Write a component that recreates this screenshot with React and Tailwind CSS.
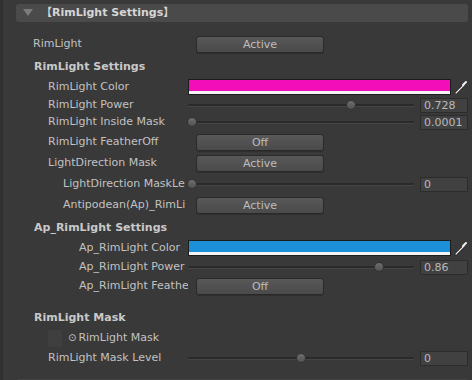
import React from 'react';

// Unity inspector style panel: RimLight settings
const LABEL_W = 185; // controls start at x=188 (container has a 3px left border)

function Label({ text, indent, bold }) {
  return (
    <div
      className={
        'shrink-0 overflow-hidden whitespace-nowrap leading-[16px] ' +
        (bold ? 'font-bold text-[#c9c9c9]' : 'text-[#c2c2c2]')
      }
      style={{ width: LABEL_W, paddingLeft: indent }}
    >
      {text}
    </div>
  );
}

function Button({ text }) {
  return (
    <div className="ml-[8px] w-[128px] h-[17px] rounded-[3px] border border-[#2a2a2a] bg-gradient-to-b from-[#585858] to-[#4a4a4a] shadow-[0_1px_0_#2e2e2e] flex items-center justify-center text-[#bdbdbd] leading-[15px]">
      {text}
    </div>
  );
}

function ValueBox({ value }) {
  return (
    <div className="ml-[6px] w-[48px] h-[15px] border border-[#2c2c2c] bg-[#414141] flex items-center pl-[3px] text-[#b9b9b9] leading-[13px]">
      {value}
    </div>
  );
}

function Slider({ frac, value }) {
  return (
    <div className="flex items-center">
      <div className="relative w-[226px] h-[16px]">
        <div className="absolute left-0 right-0 top-[7px] h-[2px] bg-[#2a2a2a] rounded-full" />
        <div className="absolute left-0 right-0 top-[9px] h-[1px] bg-[#454545]" />
        <div
          className="absolute top-[3px] w-[10px] h-[10px] rounded-full bg-gradient-to-b from-[#6e6e6e] to-[#525252] border border-[#333]"
          style={{ left: 4 + frac * 218 - 5 }}
        />
      </div>
      <ValueBox value={value} />
    </div>
  );
}

function Eyedropper() {
  return (
    <svg width="14" height="14" viewBox="0 0 14 14" className="ml-[3px]">
      <path d="M2 13 L10 5" stroke="#111" strokeWidth="2.4" strokeLinecap="round" />
      <path d="M2 13 L10 5" stroke="#f2f2f2" strokeWidth="1.2" strokeLinecap="round" />
      <path d="M9 5 L12 2" stroke="#f2f2f2" strokeWidth="2" strokeLinecap="round" />
    </svg>
  );
}

function ColorField({ color }) {
  return (
    <div className="flex items-center">
      <div className="w-[263px] h-[16px] border border-[#1c1c1c] flex flex-col">
        <div className="flex-1" style={{ background: color }} />
        <div className="h-[3px] bg-[#f4f4f4]" />
      </div>
      <Eyedropper />
    </div>
  );
}

function Row({ mt, children }) {
  return (
    <div className="flex items-center h-[16px] shrink-0" style={{ marginTop: mt }}>
      {children}
    </div>
  );
}

export default function App() {
  return (
    <div className="w-[472px] h-[380px] overflow-hidden bg-[#393939] border-l-[3px] border-[#303030] font-['DejaVu_Sans',sans-serif] text-[11px] flex flex-col">
      {/* foldout header */}
      <div className="mt-[4px] ml-[13px] w-[452px] h-[18px] shrink-0 rounded-[3px] bg-[#4a4a4a] flex items-center">
        <svg width="10" height="8" viewBox="0 0 10 8" className="ml-[7px]">
          <path d="M0 0 L10 0 L5 7 Z" fill="#7c7c7c" />
        </svg>
        <span className="ml-[8px] font-bold text-[#d6d6d6] leading-[16px] font-['DejaVu_Sans','Noto_Sans_CJK_JP',sans-serif]">
          【RimLight Settings】
        </span>
      </div>

      <Row mt={14}>
        <Label text="RimLight" indent={30} />
        <Button text="Active" />
      </Row>

      <Row mt={7}>
        <Label text="RimLight Settings" indent={31} bold />
      </Row>

      <Row mt={4}>
        <Label text="RimLight Color" indent={45} />
        <ColorField color="#f20eb8" />
      </Row>
      <Row mt={2}>
        <Label text="RimLight Power" indent={45} />
        <Slider frac={0.728} value="0.728" />
      </Row>
      <Row mt={1}>
        <Label text="RimLight Inside Mask" indent={45} />
        <Slider frac={0.0001} value="0.0001" />
      </Row>
      <Row mt={4}>
        <Label text="RimLight FeatherOff" indent={45} />
        <Button text="Off" />
      </Row>
      <Row mt={5}>
        <Label text="LightDirection Mask" indent={45} />
        <Button text="Active" />
      </Row>
      <Row mt={5}>
        <Label text="LightDirection MaskLe" indent={60} />
        <Slider frac={0} value="0" />
      </Row>
      <Row mt={5}>
        <Label text="Antipodean(Ap)_RimLi" indent={60} />
        <Button text="Active" />
      </Row>

      <Row mt={7}>
        <Label text="Ap_RimLight Settings" indent={31} bold />
      </Row>
      <Row mt={4}>
        <Label text="Ap_RimLight Color" indent={76} />
        <ColorField color="#1b8fd8" />
      </Row>
      <Row mt={3}>
        <Label text="Ap_RimLight Power" indent={76} />
        <Slider frac={0.86} value="0.86" />
      </Row>
      <Row mt={3}>
        <Label text="Ap_RimLight Feathe" indent={76} />
        <Button text="Off" />
      </Row>

      <Row mt={16}>
        <Label text="RimLight Mask" indent={31} bold />
      </Row>
      <Row mt={4}>
        <div className="ml-[45px] w-[14px] h-[17px] bg-[#3f3f3f] rounded-[1px]" />
        <span className="ml-[6px] text-[#c2c2c2] text-[10px] leading-[16px]">⊙</span>
        <span className="ml-[2px] text-[#c2c2c2] leading-[16px]">RimLight Mask</span>
      </Row>
      <Row mt={4}>
        <Label text="RimLight Mask Level" indent={45} />
        <Slider frac={0.5} value="0" />
      </Row>

      <div className="mt-[13px] ml-[13px] w-[452px] h-[4px] shrink-0 rounded-t-[3px] bg-[#444]" />
    </div>
  );
}
